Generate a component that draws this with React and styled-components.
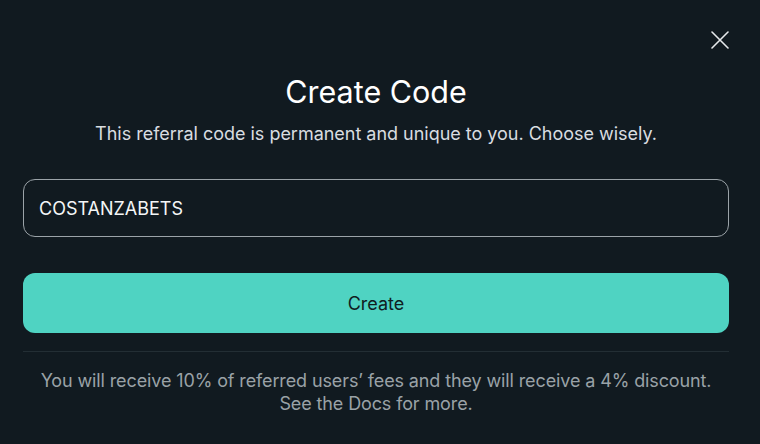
import React, { useState } from "react";
import styled, { createGlobalStyle } from "styled-components";

const GlobalStyle = createGlobalStyle`
  html, body {
    margin: 0;
    padding: 0;
    background: #111a20;
  }
  body {
    font-family: Inter, "Noto Sans", sans-serif;
    -webkit-font-smoothing: antialiased;
  }
`;

const Modal = styled.div`
  position: relative;
  width: 760px;
  height: 444px;
  box-sizing: border-box;
  padding: 72px 31px 0 23px;
  background: #111a20;
  display: flex;
  flex-direction: column;
`;

const Close = styled.button`
  position: absolute;
  top: 28px;
  right: 28px;
  width: 24px;
  height: 24px;
  padding: 0;
  border: 0;
  background: transparent;
  cursor: pointer;
  display: flex;
  align-items: center;
  justify-content: center;
`;

const Title = styled.h2`
  margin: 0;
  text-align: center;
  font-size: 30.5px;
  font-weight: 400;
  line-height: 40px;
  color: #ffffff;
`;

const Subtitle = styled.p`
  margin: 10px 0 0;
  text-align: center;
  font-size: 18px;
  line-height: 24px;
  color: #d9dde0;
  letter-spacing: -0.02px;
`;

const Input = styled.input`
  margin-top: 33px;
  height: 58px;
  box-sizing: border-box;
  padding: 0 15px;
  border: 1px solid #9ba3a8;
  border-radius: 12px;
  background: transparent;
  color: #f4f6f7;
  font-family: inherit;
  font-size: 18px;
  font-weight: 400;
  outline: none;
`;

const Submit = styled.button`
  margin-top: 36px;
  height: 60px;
  border: 0;
  border-radius: 12px;
  background: #4fd3c2;
  color: #10201f;
  font-family: inherit;
  font-size: 18px;
  cursor: pointer;
`;

const Divider = styled.hr`
  margin: 18px 0 0;
  border: 0;
  border-top: 1px solid #232e34;
`;

const Note = styled.p`
  margin: 17px 0 0;
  text-align: center;
  font-size: 18px;
  line-height: 23px;
  letter-spacing: -0.12px;
  color: #9aa2a7;
`;

export default function App() {
  const [code, setCode] = useState("COSTANZABETS");

  return (
    <>
      <GlobalStyle />
      <Modal>
        <Close aria-label="Close">
          <svg width="18" height="18" viewBox="0 0 18 18">
            <path d="M1 1L17 17M17 1L1 17" stroke="#e6e9eb" strokeWidth="1.6" strokeLinecap="round" />
          </svg>
        </Close>
        <Title>Create Code</Title>
        <Subtitle>This referral code is permanent and unique to you. Choose wisely.</Subtitle>
        <Input value={code} onChange={(e) => setCode(e.target.value)} />
        <Submit>Create</Submit>
        <Divider />
        <Note>
          You will receive 10% of referred users’ fees and they will receive a 4% discount.
          <br />
          See the Docs for more.
        </Note>
      </Modal>
    </>
  );
}
